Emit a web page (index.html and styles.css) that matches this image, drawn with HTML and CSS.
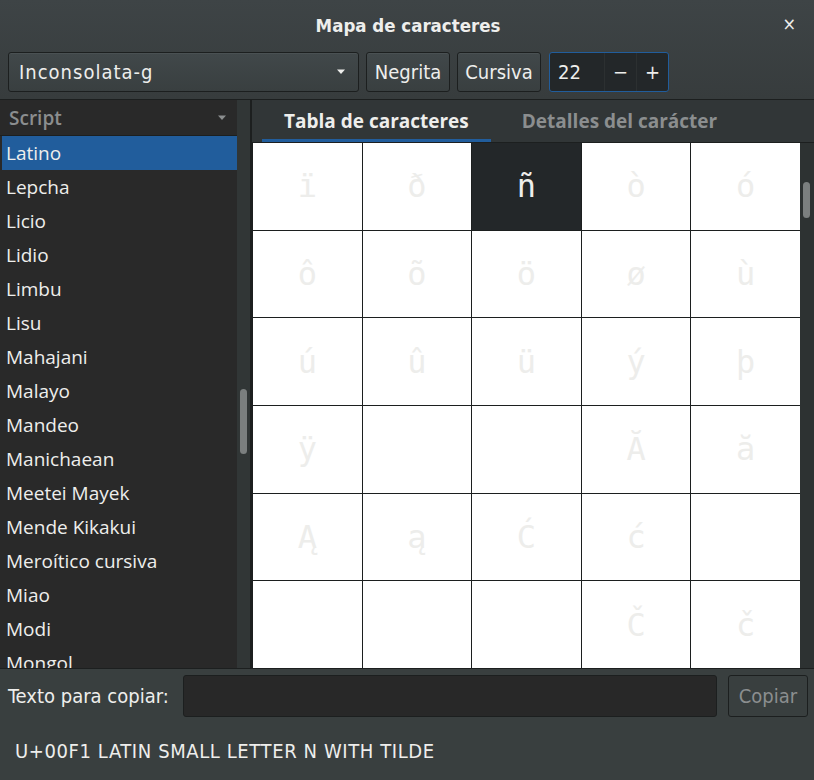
FILE: index.html
```html
<!DOCTYPE html>
<html lang="es">
<head>
<meta charset="utf-8">
<title>Mapa de caracteres</title>
<link rel="stylesheet" href="styles.css">
</head>
<body>
<div class="window">
  <header class="headerbar">
    <div class="titlerow">
      <span class="title">Mapa de caracteres</span>
      <span class="close">×</span>
    </div>
    <div class="toolbar">
      <div class="combo btn">
        <span class="combo-text">Inconsolata-g</span>
        <svg class="arrow" width="10" height="6" viewBox="0 0 10 6"><path d="M1 0.5h8L5 5z" fill="#eeeeec"/></svg>
      </div>
      <div class="btn toggle">Negrita</div>
      <div class="btn toggle">Cursiva</div>
      <div class="spin">
        <span class="spin-val">22</span>
        <span class="spin-btn">−</span>
        <span class="spin-btn">+</span>
      </div>
    </div>
  </header>
  <main class="main">
    <aside class="sidebar">
      <div class="list">
        <div class="list-head"><span>Script</span><svg width="10" height="6" viewBox="0 0 10 6"><path d="M1 0.5h8L5 5z" fill="#8b8e8f"/></svg></div>
        <div class="row selected">Latino</div>
        <div class="row">Lepcha</div>
        <div class="row">Licio</div>
        <div class="row">Lidio</div>
        <div class="row">Limbu</div>
        <div class="row">Lisu</div>
        <div class="row">Mahajani</div>
        <div class="row">Malayo</div>
        <div class="row">Mandeo</div>
        <div class="row">Manichaean</div>
        <div class="row">Meetei Mayek</div>
        <div class="row">Mende Kikakui</div>
        <div class="row">Meroítico cursiva</div>
        <div class="row">Miao</div>
        <div class="row">Modi</div>
        <div class="row">Mongol</div>
      </div>
      <div class="trough"><div class="thumb side-thumb"></div></div>
    </aside>
    <section class="pane">
      <nav class="tabs">
        <div class="tab active">Tabla de caracteres</div>
        <div class="tab">Detalles del carácter</div>
      </nav>
      <div class="gridwrap">
        <div class="grid">
          <div class="cell">ï</div><div class="cell">ð</div><div class="cell sel">ñ</div><div class="cell">ò</div><div class="cell">ó</div>
          <div class="cell">ô</div><div class="cell">õ</div><div class="cell">ö</div><div class="cell">ø</div><div class="cell">ù</div>
          <div class="cell">ú</div><div class="cell">û</div><div class="cell">ü</div><div class="cell">ý</div><div class="cell">þ</div>
          <div class="cell">ÿ</div><div class="cell"></div><div class="cell"></div><div class="cell">Ă</div><div class="cell">ă</div>
          <div class="cell">Ą</div><div class="cell">ą</div><div class="cell">Ć</div><div class="cell">ć</div><div class="cell"></div>
          <div class="cell"></div><div class="cell"></div><div class="cell"></div><div class="cell">Č</div><div class="cell">č</div>
        </div>
        <div class="trough right"><div class="thumb grid-thumb"></div></div>
      </div>
    </section>
  </main>
  <footer class="bottom">
    <div class="copyrow">
      <label class="copylabel">Texto para copiar:</label>
      <div class="entry"></div>
      <div class="btn copybtn">Copiar</div>
    </div>
    <div class="status">U+00F1 LATIN SMALL LETTER N WITH TILDE</div>
  </footer>
</div>
</body>
</html>
```
FILE: styles.css
```css
* { box-sizing: border-box; }
html, body { margin: 0; padding: 0; background: #393f3f; }
body { font-family: "DejaVu Sans Condensed", "DejaVu Sans", sans-serif; color: #eeeeec; }

.window {
  width: 814px;
  height: 780px;
  display: flex;
  flex-direction: column;
  background: #393f3f;
  overflow: hidden;
}

.headerbar {
  height: 100px;
  flex: none;
  background: linear-gradient(#3e4446, #373c3d);
  border-bottom: 1px solid #1c1f1f;
  display: flex;
  flex-direction: column;
}
.titlerow {
  height: 49px;
  padding-top: 2px;
  display: flex;
  align-items: center;
  justify-content: center;
  position: relative;
}
.title { font-weight: bold; font-size: 18.5px; padding-left: 2px; }
.close {
  position: absolute;
  right: 18px;
  top: 13px;
  font-size: 18px;
  color: #eeeeec;
}

.toolbar {
  display: flex;
  align-items: center;
  padding: 3px 0 0 8px;
  gap: 7px;
}
.btn {
  height: 40px;
  border: 1px solid #1c1f1f;
  border-radius: 3px;
  background: linear-gradient(#41484a, #393f40);
  box-shadow: inset 0 1px rgba(255,255,255,0.05);
  display: flex;
  align-items: center;
  font-size: 20px;
  color: #eeeeec;
}
.combo {
  width: 351px;
  padding: 0 12px 0 10px;
  justify-content: space-between;
}
.combo-text { letter-spacing: 1px; }
.toggle { width: 84px; justify-content: center; }
.spin {
  height: 40px;
  width: 120px;
  margin-left: 1px;
  border: 1px solid #215d9c;
  border-radius: 3px;
  background: #232729;
  display: flex;
  align-items: center;
  font-size: 20px;
}
.spin-val { flex: 1; padding-left: 8px; }
.spin-btn {
  width: 32px;
  height: 100%;
  display: flex;
  align-items: center;
  justify-content: center;
  border-left: 1px solid #2c3031;
  font-size: 20px;
}

.main {
  flex: 1;
  display: flex;
  min-height: 0;
}
.sidebar {
  width: 252px;
  flex: none;
  display: flex;
  background: #292929;
  border-right: 2px solid #1c1f1f;
}
.list {
  flex: 1;
  font-family: "Open Sans", sans-serif;
  font-size: 19px;
  overflow: hidden;
  padding-left: 2px;
}
.list-head {
  height: 36px;
  border-bottom: 1px solid #1c1f1f;
  margin-left: -2px;
  padding: 0 10px 0 9px;
  display: flex;
  align-items: center;
  justify-content: space-between;
  color: #8b8e8f;
  font-weight: 600;
}
.row {
  height: 34px;
  line-height: 34px;
  padding-left: 4px;
  color: #eeeeec;
  white-space: nowrap;
}
.row.selected { background: #215d9c; }

.trough {
  width: 13px;
  flex: none;
  background: #313636;
  position: relative;
}
.thumb {
  position: absolute;
  width: 7px;
  border-radius: 4px;
  background: #7b7f7f;
}
.side-thumb { left: 3px; top: 289px; height: 65px; }
.trough.right { width: 14px; background: #2d3232; }
.grid-thumb { left: 3px; top: 39px; height: 36px; }

.pane {
  flex: 1;
  display: flex;
  flex-direction: column;
  min-width: 0;
}
.tabs {
  height: 43px;
  flex: none;
  background: #313637;
  display: flex;
  padding-left: 10px;
  border-bottom: 1px solid #1c1f1f;
  font-family: "Open Sans", sans-serif;
  font-weight: bold;
  font-size: 19px;
}
.tab {
  padding: 0 22px;
  display: flex;
  align-items: center;
  color: #8b8e8f;
  border-bottom: 3px solid transparent;
  padding-top: 3px;
}
.tab.active { color: #eeeeec; border-bottom-color: #215d9c; }
.tab + .tab { padding-left: 31px; }

.gridwrap {
  flex: 1;
  display: flex;
  min-height: 0;
}
.grid {
  flex: 1;
  display: grid;
  grid-template-columns: repeat(5, 1fr);
  grid-template-rows: repeat(6, 1fr);
  gap: 1px;
  background: #1c1f1f;
  border-left: 1px solid #1c1f1f;
}
.cell {
  background: #ffffff;
  display: flex;
  align-items: center;
  justify-content: center;
  font-family: "DejaVu Sans Mono", monospace;
  font-size: 32px;
  color: #ededeb;
}
.cell.sel { background: #232729; color: #eeeeec; }

.bottom {
  height: 112px;
  flex: none;
  border-top: 1px solid #1c1f1f;
  display: flex;
  flex-direction: column;
}
.copyrow {
  display: flex;
  align-items: center;
  padding: 6px 6px 0 8px;
  gap: 11px;
}
.copylabel { font-size: 20px; width: 164px; white-space: nowrap; }
.entry {
  flex: 1;
  height: 42px;
  background: #282828;
  border: 1px solid #1c1f1f;
  border-radius: 3px;
}
.copybtn {
  width: 80px;
  height: 42px;
  justify-content: center;
  color: #8b8e8f;
  background: #393f3f;
  box-shadow: none;
}
.status {
  padding: 22px 0 0 15px;
  font-size: 20px;
  letter-spacing: 0.6px;
}
```
